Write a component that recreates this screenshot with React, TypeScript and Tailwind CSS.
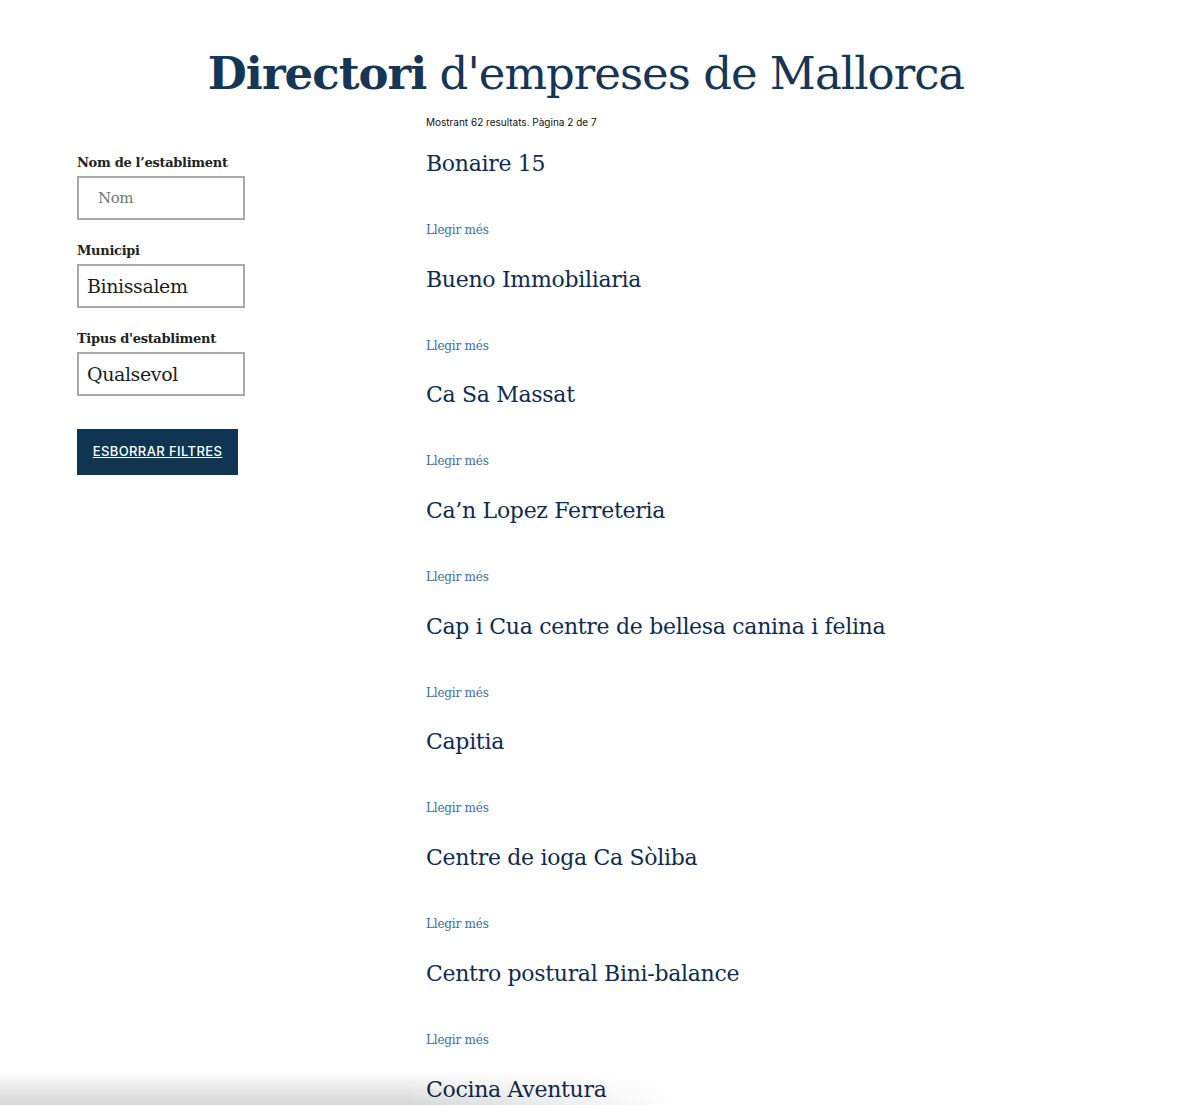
import React from 'react';

const empreses = [
  'Bonaire 15',
  'Bueno Immobiliaria',
  'Ca Sa Massat',
  'Ca’n Lopez Ferreteria',
  'Cap i Cua centre de bellesa canina i felina',
  'Capitia',
  'Centre de ioga Ca Sòliba',
  'Centro postural Bini-balance',
  'Cocina Aventura',
  'Cooperativa Agrícola',
];

const serif = "font-['DejaVu_Serif',serif]";

const Field: React.FC<{ label: string; value: string; placeholder?: boolean }> = ({ label, value, placeholder }) => (
  <div className="flex flex-col">
    <label className={`${serif} text-[13px] font-bold text-[#222] leading-[20px] tracking-[-0.3px]`}>{label}</label>
    <div
      className={`mt-[3px] w-[168px] h-[44px] border-2 border-[#a9a9a9] flex items-center ${
        placeholder ? 'pl-[19px] text-[#757575] text-[15px]' : 'pl-[8px] text-[#1d1d1d] text-[19px]'
      } ${serif} tracking-[-0.4px]`}
    >
      {value}
    </div>
  </div>
);

export default function App() {
  return (
    <div className="min-h-screen bg-white relative">
      <h1 className={`${serif} text-center text-[#163655] text-[45px] leading-none pt-[51px] pr-[28px] tracking-[-1px]`}>
        <span className="font-bold">Directori</span> <span className="font-light">d'empreses de Mallorca</span>
      </h1>

      <div className="flex pl-[77px] mt-[20px]">
        <aside className="w-[349px] shrink-0 pt-[37px] flex flex-col gap-[21px]">
          <Field label="Nom de l’establiment" value="Nom" placeholder />
          <Field label="Municipi" value="Binissalem" />
          <Field label="Tipus d'establiment" value="Qualsevol" />
          <button className="mt-[12px] w-[161px] h-[46px] bg-[#0f3553] text-white text-[13px] font-['Inter',sans-serif] font-medium underline tracking-[0.4px] flex items-center justify-center">
            ESBORRAR FILTRES
          </button>
        </aside>

        <main className="flex-1">
          <p className="font-['Inter',sans-serif] text-[10px] text-[#111] leading-[12px]">Mostrant 62 resultats. Pàgina 2 de 7</p>
          <ul className="mt-[21px] flex flex-col">
            {empreses.map((nom) => (
              <li key={nom} className="h-[115.7px]">
                <h2 className={`${serif} text-[22px] text-[#0f2c4f] leading-[30px] tracking-[-0.3px]`}>{nom}</h2>
                <a href="#" className={`${serif} block mt-[43px] text-[12px] text-[#3b6d9c] leading-[16px] tracking-[-0.2px]`}>
                  Llegir més
                </a>
              </li>
            ))}
          </ul>
        </main>
      </div>

      <div className="fixed bottom-0 left-0 w-[680px] h-[34px] pointer-events-none bg-[linear-gradient(to_top,rgba(0,0,0,0.16),rgba(0,0,0,0))] [mask-image:linear-gradient(to_right,black_60%,transparent)]" />
    </div>
  );
}
